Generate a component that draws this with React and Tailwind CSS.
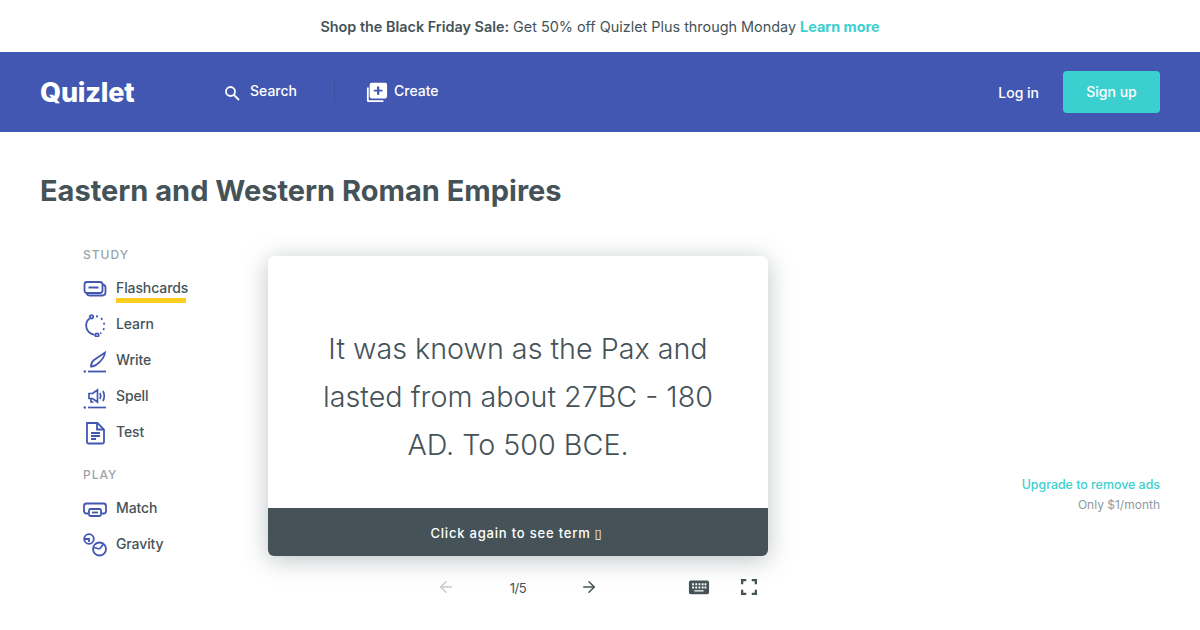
import { ArrowLeft, ArrowRight } from "lucide-react";

const navIcon = "w-6 h-6 text-[#4257b2] shrink-0";

const FlashcardsIcon = () => (
  <svg viewBox="0 0 24 24" fill="none" stroke="currentColor" strokeWidth="1.8" className={navIcon}>
    <rect x="1.5" y="5" width="18" height="11" rx="2.5" />
    <path d="M5.500 10.500h10M19.500 7.500c2 .3 3 1.500 3 3v4.500c0 2-1 3.500-3 3.500H6.500c-1.500 0-2.500-.8-3-2" />
  </svg>
);

const LearnIcon = () => (
  <svg viewBox="0 0 24 24" fill="none" stroke="currentColor" strokeWidth="1.8" className={navIcon}>
    <path d="M6.500 5.500C3.500 8 2.500 11.500 3.500 15c1 3.500 4 6 8 6.800" />
    <circle cx="8.500" cy="3.800" r="1.700" />
    <circle cx="14" cy="22" r="1.700" />
    <path d="M13 3.200c4.500.5 8 4 8.300 9 .2 3.500-1.500 6.500-4 8.300" strokeDasharray="2 3.400" />
  </svg>
);

const WriteIcon = () => (
  <svg viewBox="0 0 24 24" fill="none" stroke="currentColor" strokeWidth="1.8" className={navIcon}>
    <path d="M8 17.500c0-3 1-5 3-6.500L22 3.500c-.5 4-2.500 7-6 10-2 2-4 4-8 4Z" />
    <path d="M5 22.500h18" />
    <circle cx="1.800" cy="22.500" r="1.200" fill="currentColor" stroke="none" />
  </svg>
);

const SpellIcon = () => (
  <svg viewBox="0 0 24 24" fill="none" stroke="currentColor" strokeWidth="1.700" className={navIcon}>
    <path d="M6 8.500h3.500L14.500 5v12l-5-3.500H6ZM8 13.500V17h2.500" />
    <path d="M17 8c1 2 1 4 0 6M20 6c1.500 3 1.500 7 0 10" />
    <path d="M5 22.500h18" />
    <circle cx="1.800" cy="22.500" r="1.200" fill="currentColor" stroke="none" />
  </svg>
);

const TestIcon = () => (
  <svg viewBox="0 0 24 24" fill="none" stroke="currentColor" strokeWidth="1.800" className={navIcon}>
    <path d="M4 2h10.500L21 8.500V21a1.500 1.500 0 0 1-1.500 1.500h-14A1.500 1.500 0 0 1 4 21Z" />
    <path d="M14 2v6.500h7M8 12h9M8 15h9M8 18h5" />
  </svg>
);

const MatchIcon = () => (
  <svg viewBox="0 0 24 24" fill="none" stroke="currentColor" strokeWidth="1.800" className={navIcon}>
    <path d="M5 16.500H3.500C2 16.500 1 15.500 1 14v-5c0-1.500 1-2.500 2.500-2.500h17c1.500 0 2.500 1 2.500 2.500v5c0 1.500-1 2.500-2.500 2.500H19" />
    <rect x="6" y="12" width="12" height="7" rx="1.500" />
    <path d="M9 15.500h6" />
  </svg>
);

const GravityIcon = () => (
  <svg viewBox="0 0 24 24" fill="none" stroke="currentColor" strokeWidth="1.800" className={navIcon}>
    <circle cx="6" cy="6" r="4.800" />
    <path d="M1.500 6H6v3" />
    <circle cx="16.500" cy="16" r="6.500" />
    <path d="M16.500 16 20.500 11M16.500 16 11 14.500" />
  </svg>
);

const study = [
  { label: "Flashcards", Icon: FlashcardsIcon, active: true },
  { label: "Learn", Icon: LearnIcon },
  { label: "Write", Icon: WriteIcon },
  { label: "Spell", Icon: SpellIcon },
  { label: "Test", Icon: TestIcon },
];

const play = [
  { label: "Match", Icon: MatchIcon },
  { label: "Gravity", Icon: GravityIcon },
];

const NavRow = ({ label, Icon, active }) => (
  <div className="h-9 flex items-center gap-[9px] text-sm font-medium text-[#455358]">
    <Icon />
    <span className="relative leading-5 -mt-[2px] tracking-[-0.1px]">
      {label}
      {active && <span className="absolute left-0 w-[70px] top-[20px] h-[5px] bg-[#ffcd1f]"></span>}
    </span>
  </div>
);

const App = () => {
  return (
    <div className="w-[1200px] h-[630px] overflow-hidden bg-white text-[#455358] font-['Inter',sans-serif]">
      {/* sale banner */}
      <div className="h-[52px] flex items-center justify-center text-[14.4px] pt-px">
        <span>
          <span className="font-semibold">Shop the Black Friday Sale:</span> Get 50% off Quizlet Plus through Monday{" "}
          <span className="font-bold text-[#3ccfcf]">Learn more</span>
        </span>
      </div>

      {/* header */}
      <header className="h-20 bg-[#4257b2] flex items-center px-10 text-white">
        <div className="w-[184px] text-[27px] font-extrabold tracking-[-0.2px] leading-none">Quizlet</div>
        <div className="flex items-center h-[22px] -mt-[2px] text-sm font-medium">
          <svg viewBox="0 0 16 16" className="w-4 h-4 mr-[10px] mt-[4px]" fill="none" stroke="currentColor" strokeWidth="1.800">
            <circle cx="6.500" cy="6.500" r="4.500" />
            <path d="M10 10l5 5" />
          </svg>
          <span>Search</span>
          <span className="w-px h-[22px] bg-[#3a4d9f] ml-[37px] mr-[31px]"></span>
          <svg viewBox="0 0 24 24" className="w-[22px] h-[22px] mr-[6px] mt-[2px]" fill="currentColor">
            <path d="M6 2h15a2 2 0 0 1 2 2v13a2 2 0 0 1-2 2H6a2 2 0 0 1-2-2V4a2 2 0 0 1 2-2Zm6 4v3.500H8.500v2H12V15h2.500v-3.500H18v-2h-3.500V6Z" fillRule="evenodd" />
            <path d="M1 7h2v14h16v2H2.500A1.500 1.500 0 0 1 1 21.500Z" />
          </svg>
          <span>Create</span>
        </div>
        <div className="ml-auto flex items-center text-sm font-medium">
          <span className="mt-[2px]">Log in</span>
          <span className="ml-6 w-[97px] h-[42px] flex items-center justify-center bg-[#3ccfcf] rounded">Sign up</span>
        </div>
      </header>

      <main className="px-10">
        <h1 className="text-[29px] font-bold leading-9 pt-[41px]">Eastern and Western Roman Empires</h1>

        <div className="flex mt-[47px]">
          {/* sidebar */}
          <aside className="w-[228px] pl-[43px] -mt-[11px]">
            <div className="text-xs font-medium tracking-[1px] text-[#9aa3a8] leading-5 mb-[6px]">STUDY</div>
            {study.map((item) => (
              <NavRow key={item.label} {...item} />
            ))}
            <div className="text-xs font-medium tracking-[1px] text-[#9aa3a8] leading-5 mt-[14px] mb-[6px]">PLAY</div>
            {play.map((item) => (
              <NavRow key={item.label} {...item} />
            ))}
          </aside>

          {/* flashcard */}
          <section className="w-[500px] shrink-0">
            <div className="h-[300px] rounded-md bg-white shadow-[0_4px_24px_rgba(69,83,88,0.35)] flex flex-col overflow-hidden">
              <div className="flex-1 pt-[69px] px-10 text-center text-[28.7px] font-light leading-12">
                It was known as the Pax and lasted from about 27BC - 180 AD. To 500 BCE.
              </div>
              <div className="h-12 pt-[3px] pr-[3px] bg-[#455358] text-white text-[13px] font-medium tracking-[0.8px] flex items-center justify-center">
                Click again to see term <span className="ml-1 font-['DejaVu_Sans'] font-normal text-[13px]">▯</span>
              </div>
            </div>
            <div className="h-9 mt-[13px] flex items-center text-[#455358]">
              <ArrowLeft size={18} className="ml-[169px] text-[#c5cbce]" />
              <span className="ml-[54px] mt-[3px] text-[13px] tracking-[-0.5px] w-[18px] text-center">1/5</span>
              <ArrowRight size={18} className="ml-[53px]" />
              <svg viewBox="0 0 24 24" className="w-[22px] h-[22px] ml-[90px]" fill="currentColor">
                <path fillRule="evenodd" d="M3 5h18a2 2 0 0 1 2 2v11a2 2 0 0 1-2 2H3a2 2 0 0 1-2-2V7a2 2 0 0 1 2-2Zm1.500 3v2h2V8ZM8 8v2h2V8Zm3.500 0v2h2V8ZM15 8v2h2V8Zm3 0v2h2V8ZM4.500 11.500v2h2v-2Zm3.500 0v2h2v-2Zm3.500 0v2h2v-2Zm3.500 0v2h2v-2Zm3 0v2h2v-2ZM7 15.500V17h10v-1.500Z" />
              </svg>
              <svg viewBox="0 0 24 24" className="w-[22px] h-[22px] ml-[28px]" fill="none" stroke="currentColor" strokeWidth="2.500">
                <path d="M4.500 9V4.500H9M15 4.500h4.500V9M19.500 15v4.500H15M9 19.500H4.500V15" />
              </svg>
            </div>
          </section>

          {/* ad note */}
          <aside className="flex-1 text-right pt-[219px]">
            <div className="text-[12.4px] font-medium text-[#3ccfcf] leading-5">Upgrade to remove ads</div>
            <div className="text-xs text-[#8f999e] leading-5">Only $1/month</div>
          </aside>
        </div>
      </main>
    </div>
  );
};

export default App;
